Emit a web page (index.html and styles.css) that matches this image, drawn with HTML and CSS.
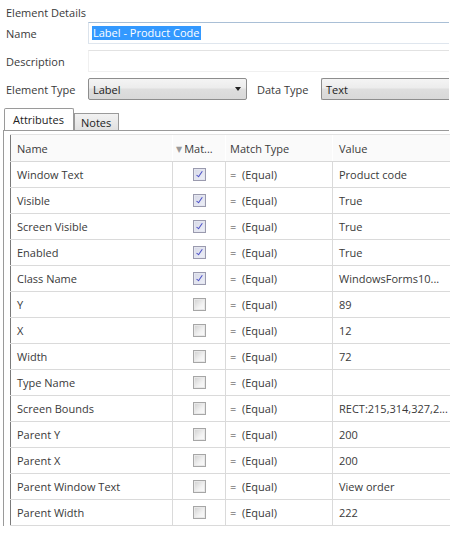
FILE: index.html
```html
<!DOCTYPE html>
<html>
<head>
<meta charset="utf-8">
<link rel="stylesheet" href="styles.css">
</head>
<body>
<div class="page">
  <div class="title">Element Details</div>
  <div class="form">
    <div class="frow">
      <div class="flabel">Name</div>
      <div class="tbox name"><span class="sel">Label - Product Code</span></div>
    </div>
    <div class="frow">
      <div class="flabel">Description</div>
      <div class="tbox desc"></div>
    </div>
    <div class="frow">
      <div class="flabel">Element Type</div>
      <div class="combo etype"><span>Label</span><span class="arrow"></span></div>
      <div class="flabel2">Data Type</div>
      <div class="combo dtype"><span>Text</span></div>
    </div>
  </div>
  <div class="tabs">
    <div class="tab active">Attributes</div>
    <div class="tab">Notes</div>
  </div>
  <div class="panel">
    <table class="grid">
      <colgroup>
        <col class="c1"><col class="c2"><col class="c3"><col class="c4">
      </colgroup>
      <thead>
        <tr><th>Name</th><th><span class="sort">&#9660;</span>Mat...</th><th>Match Type</th><th>Value</th></tr>
      </thead>
      <tbody>
        <tr><td>Window Text</td><td class="cb"><span class="chk on"></span></td><td><span class="eq">=</span>(Equal)</td><td>Product code</td></tr>
        <tr><td>Visible</td><td class="cb"><span class="chk on"></span></td><td><span class="eq">=</span>(Equal)</td><td>True</td></tr>
        <tr><td>Screen Visible</td><td class="cb"><span class="chk on"></span></td><td><span class="eq">=</span>(Equal)</td><td>True</td></tr>
        <tr><td>Enabled</td><td class="cb"><span class="chk on"></span></td><td><span class="eq">=</span>(Equal)</td><td>True</td></tr>
        <tr><td>Class Name</td><td class="cb"><span class="chk on"></span></td><td><span class="eq">=</span>(Equal)</td><td>WindowsForms10...</td></tr>
        <tr><td>Y</td><td class="cb"><span class="chk"></span></td><td><span class="eq">=</span>(Equal)</td><td>89</td></tr>
        <tr><td>X</td><td class="cb"><span class="chk"></span></td><td><span class="eq">=</span>(Equal)</td><td>12</td></tr>
        <tr><td>Width</td><td class="cb"><span class="chk"></span></td><td><span class="eq">=</span>(Equal)</td><td>72</td></tr>
        <tr><td>Type Name</td><td class="cb"><span class="chk"></span></td><td><span class="eq">=</span>(Equal)</td><td></td></tr>
        <tr><td>Screen Bounds</td><td class="cb"><span class="chk"></span></td><td><span class="eq">=</span>(Equal)</td><td>RECT:215,314,327,2...</td></tr>
        <tr><td>Parent Y</td><td class="cb"><span class="chk"></span></td><td><span class="eq">=</span>(Equal)</td><td>200</td></tr>
        <tr><td>Parent X</td><td class="cb"><span class="chk"></span></td><td><span class="eq">=</span>(Equal)</td><td>200</td></tr>
        <tr><td>Parent Window Text</td><td class="cb"><span class="chk"></span></td><td><span class="eq">=</span>(Equal)</td><td>View order</td></tr>
        <tr><td>Parent Width</td><td class="cb"><span class="chk"></span></td><td><span class="eq">=</span>(Equal)</td><td>222</td></tr>
      </tbody>
    </table>
  </div>
</div>
</body>
</html>
```
FILE: styles.css
```css
html, body {
  margin: 0;
  padding: 0;
  background: #fff;
}
body {
  font-family: "Open Sans", "Noto Sans", "DejaVu Sans", sans-serif;
  font-size: 11px;
  color: #3a3a3a;
}
.page {
  width: 449px;
  padding-top: 5px;
}
.title {
  padding-left: 6px;
  height: 16px;
  line-height: 16px;
}
.form {
  display: flex;
  flex-direction: column;
  gap: 6px;
  padding-left: 6px;
  margin-top: 1px;
}
.frow {
  display: flex;
  align-items: center;
  height: 22px;
}
.flabel {
  width: 82px;
}
.tbox {
  flex: 1;
  height: 22px;
  box-sizing: border-box;
  display: flex;
  align-items: center;
  padding-left: 3px;
}
.tbox.name {
  border-top: 1px solid #a9bfd6;
  border-bottom: 1px solid #dfe6ee;
  border-left: 1px solid #dbe3ec;
}
.tbox.desc {
  border-top: 1px solid #e2e2e2;
  border-bottom: 1px solid #f0f0f0;
  border-left: 1px solid #f0f0f0;
}
.sel {
  background: #3399ff;
  color: #fff;
  padding: 0 1px;
  line-height: 14px;
}
.combo {
  height: 22px;
  box-sizing: border-box;
  border: 1px solid #8d8d8d;
  border-radius: 2px;
  background: linear-gradient(#f4f4f4 0%, #ececec 45%, #dedede 50%, #d8d8d8 100%);
  display: flex;
  align-items: center;
  padding-left: 4px;
  color: #222;
}
.combo.etype {
  width: 159px;
  justify-content: space-between;
  padding-right: 5px;
}
.arrow {
  width: 0;
  height: 0;
  border-left: 3.5px solid transparent;
  border-right: 3.5px solid transparent;
  border-top: 4px solid #222;
}
.flabel2 {
  margin-left: 10px;
  width: 64px;
}
.combo.dtype {
  flex: 1;
  border-right: none;
  border-radius: 2px 0 0 2px;
}
.tabs {
  display: flex;
  align-items: flex-end;
  margin-top: 8px;
  height: 22px;
  padding-left: 4px;
}
.tab {
  box-sizing: border-box;
  border: 1px solid #9a9a9a;
  border-bottom: none;
  background: linear-gradient(#f2f2f2, #e1e1e1);
  height: 17px;
  padding: 0 7px 0 6px;
  display: flex;
  align-items: center;
  color: #222;
}
.tab.active {
  background: #fff;
  height: 22px;
  width: 70px;
  justify-content: center;
  border-color: #9a9a9a;
  border-radius: 2px 2px 0 0;
}
.panel {
  margin-left: 3px;
  border-left: 1px solid #9a9a9a;
  border-top: 1px solid #9a9a9a;
  padding: 3px 0 0 6px;
}
.grid {
  border-collapse: collapse;
  width: 439px;
  table-layout: fixed;
  border-left: 1px solid #7a7a7a;
  border-top: 1px solid #9a9a9a;
}
.c1 { width: 162px; }
.c2 { width: 53px; }
.c3 { width: 107px; }
.c4 { width: 117px; }
.grid th {
  height: 26px;
  font-weight: normal;
  text-align: left;
  padding: 0 0 0 6px;
  color: #3a3a3a;
  border-top: 1px solid #e3e3e3;
  border-bottom: 1px solid #d8d8d8;
  background: #fafafa;
  white-space: nowrap;
}
.grid th + th {
  border-left: 1px solid #fff;
}
.grid th:nth-child(2) {
  padding-left: 3px;
}
.grid th:nth-child(3) {
  padding-left: 4px;
}
.sort {
  color: #9a9a9a;
  font-size: 8px;
  margin-right: 2px;
  position: relative;
  top: -1px;
}
.grid td {
  height: 25px;
  padding: 0 0 0 6px;
  border-bottom: 1px solid #dadada;
  border-left: 1px solid #dadada;
  white-space: nowrap;
  overflow: hidden;
  color: #3a3a3a;
}
.grid td:first-child {
  border-left: none;
}
.grid td:nth-child(3) {
  padding-left: 4px;
}
.grid td.cb {
  text-align: center;
  padding: 0;
}
.eq {
  display: inline-block;
  width: 12px;
}
.chk {
  display: inline-block;
  width: 11px;
  height: 11px;
  border: 1px solid #a6a6a6;
  background: linear-gradient(135deg, #cfcfcf, #f2f2f2 60%, #fbfbfb);
  vertical-align: middle;
  position: relative;
  top: -1px;
  box-shadow: inset 0 0 0 1px #e8e8e8;
}
.chk.on {
  border-color: #9a9aae;
  background: linear-gradient(135deg, #d6d8e6, #eef0f8);
  box-shadow: inset 0 0 0 1px #e4e6f0;
}
.chk.on::after {
  content: "";
  position: absolute;
  left: 4px;
  top: 1px;
  width: 2px;
  height: 6px;
  border-right: 1.5px solid #4a4fc8;
  border-bottom: 1.5px solid #4a4fc8;
  transform: rotate(35deg);
}
```
